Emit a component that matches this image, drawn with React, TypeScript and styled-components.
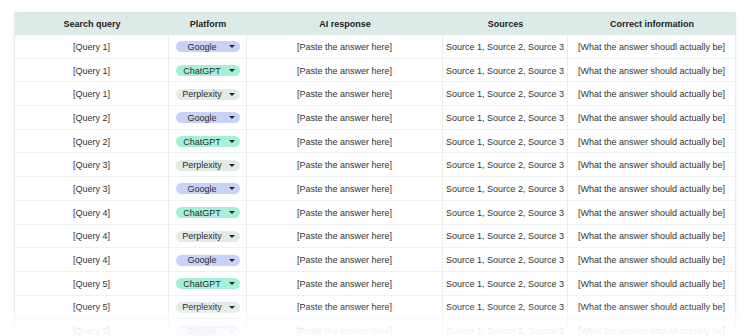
import React from 'react';
import styled, { createGlobalStyle } from 'styled-components';

const GlobalStyle = createGlobalStyle`
  html, body {
    margin: 0;
    padding: 0;
    background: #ffffff;
    font-family: 'Liberation Sans', Arial, sans-serif;
  }
`;

type Platform = 'Google' | 'ChatGPT' | 'Perplexity';

const pillColors: Record<Platform, string> = {
  Google: '#c7d3f6',
  ChatGPT: '#a6f0da',
  Perplexity: '#e3ebe7',
};

const Page = styled.div`
  position: relative;
  height: 336px;
  overflow: hidden;
  padding: 12px 0 0 14px;
  box-sizing: border-box;
`;

const Table = styled.div`
  display: grid;
  grid-template-columns: 154px 78px 196px 125px 168px;
  width: 721px;
  border-left: 1px solid #e6eceb;
  box-shadow: 0 0 4px rgba(0, 0, 0, 0.05);
  font-size: 9px;
  color: #333;
`;

const HeadCell = styled.div`
  height: 23px;
  box-sizing: border-box;
  padding-top: 1px;
  background: #dcebe7;
  display: flex;
  align-items: center;
  justify-content: center;
  font-weight: bold;
  color: #222;
`;

const Cell = styled.div<{ $last?: boolean }>`
  height: 23.7px;
  box-sizing: border-box;
  padding-top: 1px;
  display: flex;
  align-items: center;
  justify-content: center;
  white-space: nowrap;
  border-bottom: 1px solid #edf2f0;
  border-right: 1px solid ${(p) => (p.$last ? '#e6eceb' : '#e8eeec')};
`;

const Pill = styled.div<{ $bg: string }>`
  width: 64px;
  height: 11px;
  border-radius: 6px;
  background: ${(p) => p.$bg};
  display: flex;
  align-items: center;
  box-sizing: border-box;
  padding: 0 5px 0 0;
  color: #2b2b2b;
`;

const PillLabel = styled.span`
  flex: 1;
  text-align: center;
`;

const Arrow = styled.span`
  width: 0;
  height: 0;
  border-left: 3px solid transparent;
  border-right: 3px solid transparent;
  border-top: 3.5px solid #222;
`;

const Fade = styled.div`
  position: absolute;
  left: 0;
  right: 0;
  bottom: 0;
  height: 30px;
  background: linear-gradient(to bottom, rgba(255, 255, 255, 0), rgba(255, 255, 255, 0.92) 80%);
`;

const rows: { q: number; p: Platform }[] = [
  { q: 1, p: 'Google' },
  { q: 1, p: 'ChatGPT' },
  { q: 1, p: 'Perplexity' },
  { q: 2, p: 'Google' },
  { q: 2, p: 'ChatGPT' },
  { q: 3, p: 'Perplexity' },
  { q: 3, p: 'Google' },
  { q: 4, p: 'ChatGPT' },
  { q: 4, p: 'Perplexity' },
  { q: 4, p: 'Google' },
  { q: 5, p: 'ChatGPT' },
  { q: 5, p: 'Perplexity' },
  { q: 5, p: 'Google' },
];

const headers = ['Search query', 'Platform', 'AI response', 'Sources', 'Correct information'];

export default function App() {
  return (
    <>
      <GlobalStyle />
      <Page>
        <Table>
          {headers.map((h) => (
            <HeadCell key={h}>{h}</HeadCell>
          ))}
          {rows.map((r, i) => (
            <React.Fragment key={i}>
              <Cell>[Query {r.q}]</Cell>
              <Cell>
                <Pill $bg={pillColors[r.p]}>
                  <PillLabel>{r.p}</PillLabel>
                  <Arrow />
                </Pill>
              </Cell>
              <Cell>[Paste the answer here]</Cell>
              <Cell>Source 1, Source 2, Source 3</Cell>
              <Cell $last>
                {i === 0 ? '[What the answer shoudl actually be]' : '[What the answer should actually be]'}
              </Cell>
            </React.Fragment>
          ))}
        </Table>
        <Fade />
      </Page>
    </>
  );
}
